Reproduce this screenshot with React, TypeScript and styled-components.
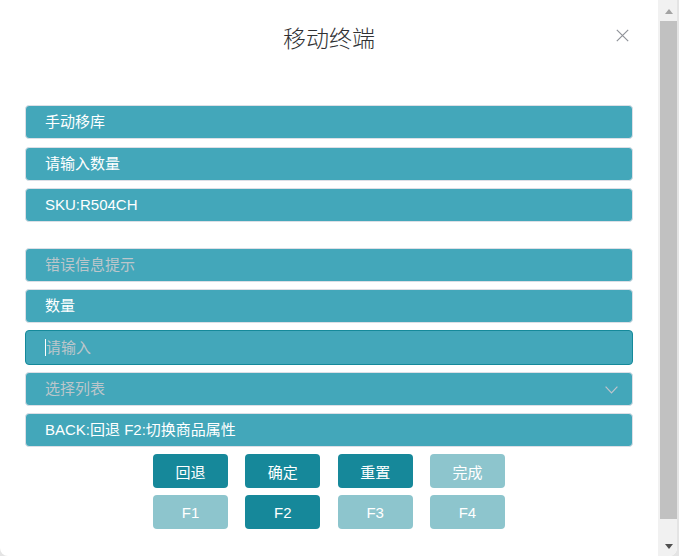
import React from "react";
import styled, { createGlobalStyle } from "styled-components";

const Global = createGlobalStyle`
  html, body { margin: 0; padding: 0; background: #e4e4e4; }
  body { font-family: "Liberation Sans", "Noto Sans CJK SC", sans-serif; }
  * { box-sizing: border-box; }
`;

const Frame = styled.div`
  display: flex;
  width: 677px;
  height: 556px;
  background: #ffffff;
  border-radius: 0 0 8px 8px;
  overflow: hidden;
`;

const Content = styled.div`
  position: relative;
  width: 658px;
  flex: none;
`;

const ScrollTrack = styled.div`
  width: 19px;
  flex: none;
  display: flex;
  flex-direction: column;
  background: #f1f1f1;
`;

const ScrollArrow = styled.div<{ $dir: "up" | "down" }>`
  height: 19px;
  flex: none;
  display: flex;
  align-items: center;
  justify-content: center;
  padding-left: 2px;
  &::before {
    content: "";
    width: 0;
    height: 0;
    border-left: 4.5px solid transparent;
    border-right: 4.5px solid transparent;
    ${(p) =>
      p.$dir === "up"
        ? "border-bottom: 5px solid #a3a3a3; margin-top: 3px;"
        : "border-top: 5px solid #505050; margin-top: -1px;"}
  }
`;

const ScrollBody = styled.div`
  flex: 1;
  padding: 2px 0 18px 2px;
  display: flex;
`;

const Thumb = styled.div`
  flex: 1;
  background: #c1c1c1;
`;

const Header = styled.header`
  padding-top: 24px;
  height: 54px;
  text-align: center;
`;

const Title = styled.span`
  font-size: 23px;
  line-height: 30px;
  color: #303133;
  font-weight: 300;
`;

const CloseButton = styled.button`
  position: absolute;
  top: 29px;
  right: 29px;
  width: 13px;
  height: 13px;
  padding: 0;
  border: none;
  background: transparent;
  display: flex;
  align-items: center;
  justify-content: center;
  cursor: pointer;
`;

const Body = styled.main`
  padding: 51px 25px 0;
`;

const Group = styled.div<{ $gap: number; $mt?: number }>`
  display: flex;
  flex-direction: column;
  gap: ${(p) => p.$gap}px;
  margin-top: ${(p) => p.$mt ?? 0}px;
`;

const Field = styled.div<{ $placeholder?: boolean }>`
  position: relative;
  height: 34px;
  display: flex;
  align-items: center;
  padding: 0 19px;
  background: #43a7ba;
  border: 1px solid #dcdfe6;
  border-radius: 4px;
  font-size: 15px;
  line-height: 20px;
  color: ${(p) => (p.$placeholder ? "#bcc6cb" : "#ffffff")};
  white-space: nowrap;
`;

const InputWrap = styled.div`
  position: relative;
  height: 35px;
`;

const InputBox = styled.input`
  height: 35px;
  width: 100%;
  padding: 0 19px 0 20px;
  background: #43a7ba;
  border: 1px solid #15899a;
  border-radius: 4px;
  font-family: "Liberation Sans", "Noto Sans CJK SC", sans-serif;
  font-size: 15px;
  color: #ffffff;
  caret-color: #ffffff;
  outline: none;
  &::placeholder { color: #bcc6cb; }
`;

const Caret = styled.span`
  position: absolute;
  left: 20px;
  top: 9px;
  width: 1px;
  height: 17px;
  background: #ffffff;
  pointer-events: none;
`;

const Chevron = styled.svg`
  position: absolute;
  right: 14px;
  top: 13px;
`;

const Buttons = styled.div`
  display: grid;
  grid-template-columns: repeat(4, 75px);
  column-gap: 17.3px;
  row-gap: 7px;
  justify-content: center;
  margin-top: 7px;
`;

const KeyButton = styled.button<{ $active: boolean }>`
  height: 34px;
  border: none;
  border-radius: 4px;
  background: ${(p) => (p.$active ? "#16889a" : "#8dc5cd")};
  color: #ffffff;
  font-family: "Liberation Sans", "Noto Sans CJK SC", sans-serif;
  font-size: 15px;
  padding: 0;
  cursor: pointer;
`;

const keys: { label: string; active: boolean }[] = [
  { label: "回退", active: true },
  { label: "确定", active: true },
  { label: "重置", active: true },
  { label: "完成", active: false },
  { label: "F1", active: false },
  { label: "F2", active: true },
  { label: "F3", active: false },
  { label: "F4", active: false },
];

export default function App() {
  return (
    <>
      <Global />
      <Frame>
        <Content>
          <Header>
            <Title>移动终端</Title>
          </Header>
          <CloseButton aria-label="close">
            <svg width="13" height="13" viewBox="0 0 13 13">
              <path d="M0.8 0.8 L12.2 12.2 M12.2 0.8 L0.8 12.2" stroke="#909399" strokeWidth="1.2" fill="none" />
            </svg>
          </CloseButton>
          <Body>
            <Group $gap={7.5}>
              <Field>手动移库</Field>
              <Field>请输入数量</Field>
              <Field>SKU:R504CH</Field>
            </Group>
            <Group $gap={7} $mt={26}>
              <Field $placeholder>错误信息提示</Field>
              <Field>数量</Field>
              <InputWrap>
                <InputBox placeholder="请输入" />
                <Caret />
              </InputWrap>
              <Field $placeholder>
                选择列表
                <Chevron width="13" height="8" viewBox="0 0 13 8">
                  <path d="M0.6 0.6 L6.5 6.8 L12.4 0.6" stroke="#c0c4cc" strokeWidth="1.2" fill="none" />
                </Chevron>
              </Field>
              <Field>BACK:回退 F2:切换商品属性</Field>
            </Group>
            <Buttons>
              {keys.map((k) => (
                <KeyButton key={k.label} $active={k.active}>
                  {k.label}
                </KeyButton>
              ))}
            </Buttons>
          </Body>
        </Content>
        <ScrollTrack>
          <ScrollArrow $dir="up" />
          <ScrollBody>
            <Thumb />
          </ScrollBody>
          <ScrollArrow $dir="down" />
        </ScrollTrack>
      </Frame>
    </>
  );
}
